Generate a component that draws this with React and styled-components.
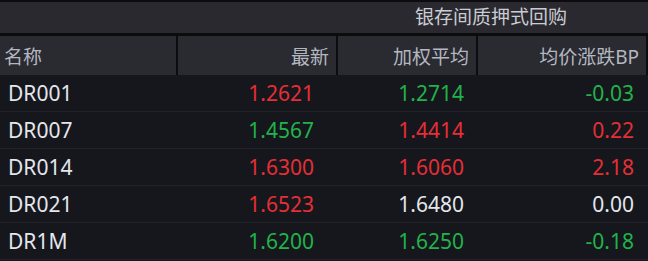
import React from 'react';
import styled, { createGlobalStyle } from 'styled-components';

const GlobalStyle = createGlobalStyle`
    html, body {
        margin: 0;
        padding: 0;
        background: #0c0c0f;
    }
    body {
        font-family: "Noto Sans", "Noto Sans CJK SC", sans-serif;
    }
`;

const COLUMNS = '176px 158px 138px 168px';

const colors = {
    up: '#e62e36',
    down: '#21b34b',
    flat: '#e4e6ec',
};

const Board = styled.div`
    width: 648px;
    height: 261px;
    overflow: hidden;
    background: #0c0c0f;
    display: flex;
    flex-direction: column;
`;

const TitleBar = styled.div`
    margin-top: 2px;
    height: 31px;
    background: #29292f;
    display: grid;
    grid-template-columns: 176px 2px 158px 2px 306px 2px;
`;

const Title = styled.div`
    grid-column: 5;
    display: flex;
    align-items: center;
    justify-content: center;
    font-size: 19px;
    color: #c9ccd3;
    line-height: 1;
`;

const HeaderRow = styled.div`
    margin-top: 3px;
    height: 39px;
    display: grid;
    grid-template-columns: ${COLUMNS};
    column-gap: 2px;
    padding-right: 2px;
`;

const HeaderCell = styled.div`
    background: #2a2a31;
    display: flex;
    align-items: center;
    justify-content: ${p => (p.$left ? 'flex-start' : 'flex-end')};
    padding: ${p => (p.$left ? '0 0 0 4px' : '0 7px 0 0')};
    font-size: 19px;
    color: #b3b7c0;
`;

const Body = styled.div`
    flex: 1;
    background: #15171c;
    display: flex;
    flex-direction: column;
`;

const Row = styled.div`
    height: 36px;
    flex: none;
    border-bottom: 1px solid #212329;
    display: grid;
    grid-template-columns: ${COLUMNS};
    column-gap: 2px;
    padding-right: 2px;
`;

const Cell = styled.div`
    display: flex;
    align-items: center;
    justify-content: ${p => (p.$left ? 'flex-start' : 'flex-end')};
    padding: ${p => (p.$left ? '0 0 0 8px' : `0 ${p.$pad}px 0 0`)};
    font-size: 21px;
    color: ${p => colors[p.$tone] || colors.flat};
`;

const toneOf = (value) => {
    const n = parseFloat(value);
    if (n > 0) return 'up';
    if (n < 0) return 'down';
    return 'flat';
};

const rows = [
    { name: 'DR001', last: '1.2621', lastTone: 'up', avg: '1.2714', avgTone: 'down', bp: '-0.03' },
    { name: 'DR007', last: '1.4567', lastTone: 'down', avg: '1.4414', avgTone: 'up', bp: '0.22' },
    { name: 'DR014', last: '1.6300', lastTone: 'up', avg: '1.6060', avgTone: 'up', bp: '2.18' },
    { name: 'DR021', last: '1.6523', lastTone: 'up', avg: '1.6480', avgTone: 'flat', bp: '0.00' },
    { name: 'DR1M', last: '1.6200', lastTone: 'down', avg: '1.6250', avgTone: 'down', bp: '-0.18' },
];

const App = () => (
    <Board>
        <GlobalStyle />
        <TitleBar>
            <Title>银存间质押式回购</Title>
        </TitleBar>
        <HeaderRow>
            <HeaderCell $left>名称</HeaderCell>
            <HeaderCell>最新</HeaderCell>
            <HeaderCell>加权平均</HeaderCell>
            <HeaderCell>均价涨跌BP</HeaderCell>
        </HeaderRow>
        <Body>
            {rows.map(r => (
                <Row key={r.name}>
                    <Cell $left>{r.name}</Cell>
                    <Cell $pad={22} $tone={r.lastTone}>{r.last}</Cell>
                    <Cell $pad={12} $tone={r.avgTone}>{r.avg}</Cell>
                    <Cell $pad={12} $tone={toneOf(r.bp)}>{r.bp}</Cell>
                </Row>
            ))}
        </Body>
    </Board>
);

export default App;
